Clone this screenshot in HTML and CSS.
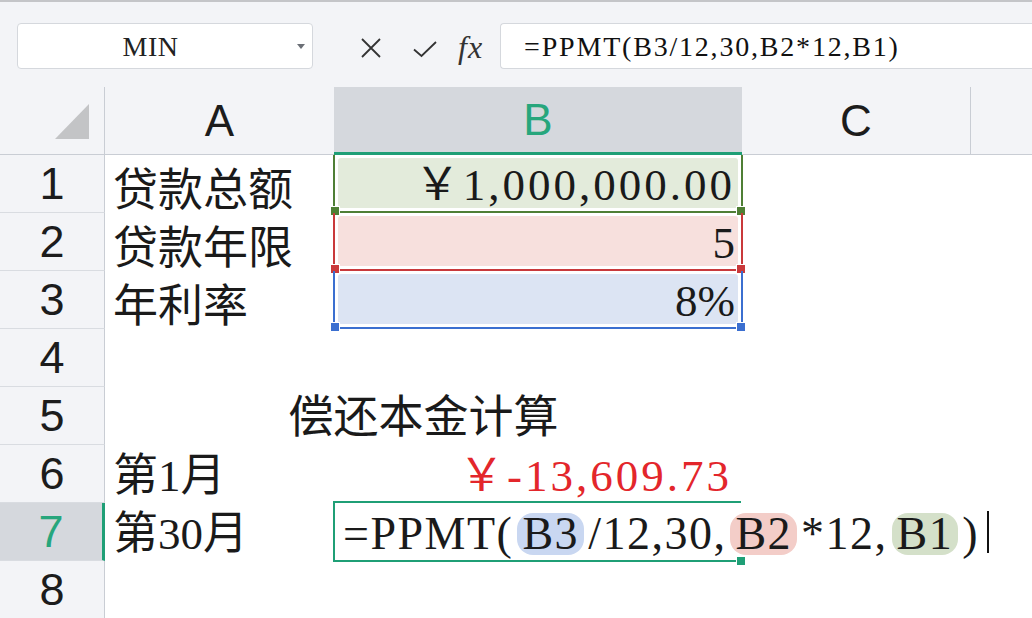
FILE: index.html
```html
<!DOCTYPE html>
<html lang="zh-CN">
<head>
<meta charset="utf-8">
<title>PPMT</title>
<link rel="stylesheet" href="styles.css">
</head>
<body>
<div class="toolbar">
  <div class="namebox"><span class="name">MIN</span><span class="drop"></span></div>
  <svg class="ico-x" width="22" height="22" viewBox="0 0 22 22"><path d="M2 2L20 20M20 2L2 20" fill="none" stroke="#333" stroke-width="1.8"/></svg>
  <svg class="ico-ok" width="26" height="18" viewBox="0 0 26 18"><path d="M2 9.5L9.5 16L24 2" fill="none" stroke="#333" stroke-width="1.8"/></svg>
  <span class="fx">fx</span>
  <div class="formula">=PPMT(B3/12,30,B2*12,B1)</div>
</div>
<div class="sheet">
  <div class="corner"><span class="tri"></span></div>
  <div class="ch">A</div>
  <div class="ch sel">B</div>
  <div class="ch cc">C</div>
  <div class="ch"></div>

  <div class="rh">1</div>
  <div class="cell lbl">贷款总额</div>
  <div class="cell rng g"><div class="fill sim num">￥1,000,000.00</div></div>
  <div class="cell rest"></div>

  <div class="rh">2</div>
  <div class="cell lbl">贷款年限</div>
  <div class="cell rng r"><div class="fill sim">5</div></div>
  <div class="cell rest"></div>

  <div class="rh">3</div>
  <div class="cell lbl">年利率</div>
  <div class="cell rng b"><div class="fill sim">8%</div></div>
  <div class="cell rest"></div>

  <div class="rh">4</div>
  <div class="cell"></div>
  <div class="cell"></div>
  <div class="cell rest"></div>

  <div class="rh">5</div>
  <div class="cell merged sim">偿还本金计算</div>
  <div class="cell rest"></div>

  <div class="rh">6</div>
  <div class="cell sim">第1月</div>
  <div class="cell sim num neg">￥-13,609.73</div>
  <div class="cell rest"></div>

  <div class="rh sel">7</div>
  <div class="cell sim">第30月</div>
  <div class="cell editcell">
    <div class="editor sim">=PPMT(<span class="ref rb">B3</span>/12,30,<span class="ref rr">B2</span>*12,<span class="ref rg">B1</span>)<span class="caret"></span></div>
  </div>
  <div class="cell rest"></div>

  <div class="rh">8</div>
  <div class="cell"></div>
  <div class="cell"></div>
  <div class="cell rest"></div>
</div>
</body>
</html>
```
FILE: styles.css
```css
* { box-sizing: border-box; }
html, body { margin: 0; padding: 0; }
body {
  width: 1032px;
  height: 618px;
  overflow: hidden;
  background: #ffffff;
  font-family: "Liberation Sans", Arial, sans-serif;
  color: #1a1a1a;
}

/* ---------- toolbar ---------- */
.toolbar {
  height: 87px;
  background: #f3f4f7;
  border-top: 2px solid #c4c5c8;
  display: flex;
  align-items: flex-start;
  padding: 21px 0 0 17px;
}
.namebox {
  width: 296px;
  height: 46px;
  background: #ffffff;
  border: 1px solid #d5d8dd;
  border-radius: 4px;
  display: flex;
  align-items: center;
}
.namebox .name {
  flex: 1;
  text-align: center;
  padding: 2px 14px 0 0;
  font-family: "Liberation Serif", serif;
  font-size: 28px;
  letter-spacing: 0.5px;
  color: #222;
}
.namebox .drop {
  width: 0;
  height: 0;
  border-left: 4px solid transparent;
  border-right: 4px solid transparent;
  border-top: 5px solid #6b6f76;
  margin-right: 7px;
}
.ico-x { margin: 14px 0 0 47px; }
.ico-ok { margin: 17px 0 0 30px; }
.fx {
  margin: 6px 0 0 20px;
  font-family: "Liberation Serif", serif;
  font-style: italic;
  font-size: 32px;
  color: #333;
  letter-spacing: 1px;
}
.formula {
  flex: 1;
  height: 46px;
  margin-left: 17px;
  background: #ffffff;
  border: 1px solid #d5d8dd;
  border-right: 0;
  border-radius: 4px 0 0 4px;
  display: flex;
  align-items: center;
  padding: 2px 0 0 23px;
  font-family: "Liberation Serif", serif;
  font-size: 28px;
  letter-spacing: 1.8px;
  color: #111;
}

/* ---------- sheet ---------- */
.sheet {
  display: grid;
  grid-template-columns: 105px 229px 408px 229px 1fr;
  grid-template-rows: 68px repeat(8, 58px);
}
.corner {
  background: #f3f4f7;
  border-right: 1px solid #c9cdd4;
  border-bottom: 1px solid #c9cdd4;
  display: flex;
  justify-content: flex-end;
  align-items: flex-end;
  padding: 0 15px 15px 0;
}
.tri {
  width: 0;
  height: 0;
  border-left: 34px solid transparent;
  border-bottom: 35px solid #c3c4c6;
}
.ch {
  background: #f3f4f7;
  border-bottom: 1px solid #c9cdd4;
  display: flex;
  align-items: center;
  justify-content: center;
  font-size: 44px;
  color: #1c1c1c;
}
.ch.sel {
  background: #d5d8dd;
  color: #27a67c;
  border-bottom: 3px solid #1f9f76;
}
.ch.cc { border-right: 1px solid #c9cdd4; }

.rh {
  background: #f3f4f7;
  border-right: 1px solid #c9cdd4;
  border-bottom: 1px solid #d9dce1;
  display: flex;
  align-items: center;
  justify-content: center;
  font-size: 45px;
  color: #1c1c1c;
}
.rh.sel {
  background: #d5d8dd;
  color: #27a67c;
  border-right: 3px solid #1f9f76;
}

.cell {
  display: flex;
  align-items: center;
  padding: 4px 8px 0;
  font-size: 45px;
  line-height: 1;
  white-space: nowrap;
  color: #1a1a1a;
}
.rest { grid-column: span 2; }
.lbl { font-family: "Noto Sans CJK SC", sans-serif; }
.sim { font-family: "Liberation Serif", "Noto Sans CJK SC", serif; }
.num { letter-spacing: 3px; }
.merged { grid-column: span 2; justify-content: center; }
.neg { justify-content: flex-end; color: #e3262b; padding-right: 10px; }

/* coloured reference ranges */
.rng {
  position: relative;
  z-index: 2;
  margin: 0 -1px;
  padding: 3px 3px 3px 3px;
  border: 2px solid currentColor;
  border-top: 0;
}
.rng::before,
.rng::after {
  content: "";
  position: absolute;
  bottom: -5px;
  width: 8px;
  height: 8px;
  background: currentColor;
  border: 1px solid #ffffff;
}
.rng::before { left: -5px; }
.rng::after { right: -5px; }
.rng .fill {
  width: 100%;
  height: 100%;
  border-radius: 3px;
  display: flex;
  align-items: center;
  justify-content: flex-end;
  padding: 4px 3px 0 0;
  color: #1a1a1a;
}
.g { color: #4f7f35; }
.g .fill { background: #e3ebdb; }
.r { color: #c9393b; }
.r .fill { background: #f7e0dd; }
.b { color: #3b6fd0; }
.b .fill { background: #dce4f3; }

/* cell in edit mode */
.editcell {
  position: relative;
  z-index: 3;
  padding: 0;
}
.editcell::after {
  content: "";
  position: absolute;
  right: -4px;
  bottom: -5px;
  width: 8px;
  height: 8px;
  background: #1f9f76;
  border: 1px solid #ffffff;
}
.editor {
  width: 100%;
  height: calc(100% + 3px);
  margin: -2px 0 -1px -1px;
  border: 2.5px solid #1f9f76;
  border-right: 0;
  display: flex;
  align-items: center;
  padding: 4px 0 0 8px;
  font-size: 46px;
  letter-spacing: 1.5px;
  color: #1a1a1a;
}
.ref {
  flex-shrink: 0;
  display: inline-block;
  line-height: 42px;
  padding: 0 5px;
  margin: 0 4px;
  border-radius: 16px;
}
.rb { background: #c9d7f1; }
.rr { background: #f3cdc8; }
.rg { background: #d4e0c9; }
.caret {
  flex-shrink: 0;
  display: inline-block;
  width: 2px;
  height: 42px;
  background: #111;
  margin: -4px 0 0 8px;
}
```
